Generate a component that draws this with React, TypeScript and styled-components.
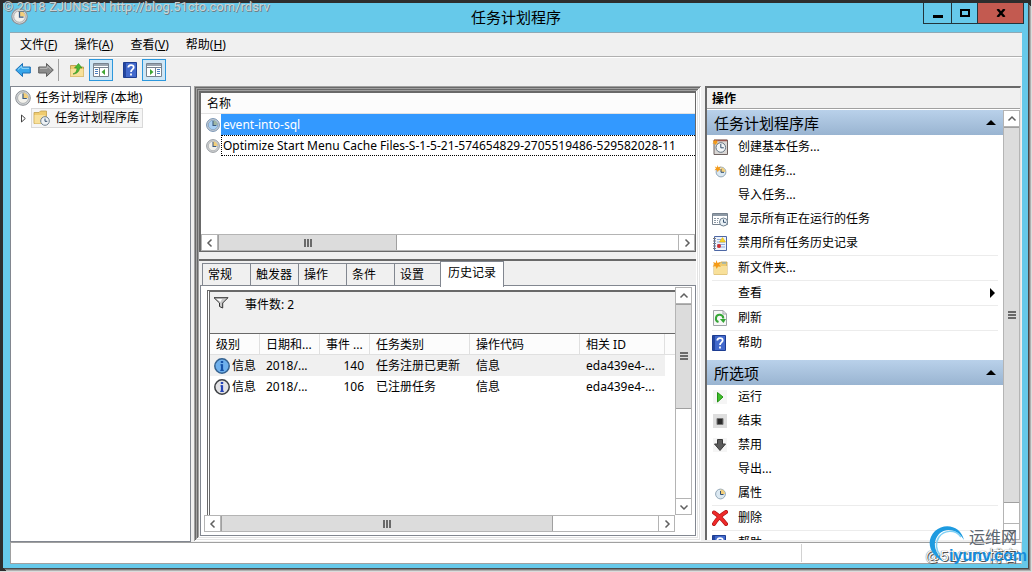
import React from "react";
import styled, { createGlobalStyle, css } from "styled-components";

const Global = createGlobalStyle`
  * { box-sizing: border-box; }
  html, body { margin: 0; padding: 0; }
  body, button, table {
    font-family: "Noto Sans", "Noto Sans CJK SC", sans-serif;
    font-size: 12px;
    line-height: 16px;
    color: #000;
  }
  button { margin: 0; padding: 0; border: 0; background: none; text-align: left; white-space: nowrap; }
`;

const Desktop = styled.div`
  position: relative;
  display: flex;
  height: 100vh;
  padding: 3px 3px 3px 3px;
  background: #2d2d2d;
  border-right: 1px solid #dcdcdc;
  border-bottom: 1px solid #dcdcdc;
  overflow: hidden;
`;

const Window = styled.div`
  flex: 1;
  min-width: 0;
  display: flex;
  flex-direction: column;
  padding: 0 6px 4px 7px;
  background: #66c9ea;
  box-shadow: 1px 1px 0 #4a4a4a, 2px 2px 0 #7d7d7d, 3px 3px 0 #b0b0b0;
`;

const TitleBar = styled.header`
  display: grid;
  grid-template-columns: 101px 1fr 101px;
  height: 29px;
  flex: none;
`;

const AppIcon = styled.div`
  padding: 5px 0 0 1px;
  svg { display: block; }
`;

const Title = styled.h1`
  margin: 0;
  padding-top: 4px;
  font-size: 15px;
  line-height: 20px;
  font-weight: 400;
  text-align: center;
`;

const Captions = styled.div`
  display: flex;
  justify-content: flex-end;
  align-items: flex-start;
  margin-right: -2px;
`;

const CaptionButton = styled.button<{ $width: number; $close?: boolean }>`
  width: ${(p) => p.$width}px;
  height: 21px;
  display: flex;
  align-items: center;
  justify-content: center;
  border: solid #22343b;
  border-width: 0 0 1px 1px;
  background: ${(p) => (p.$close ? "#c35a50" : "transparent")};
  &:last-child { border-right-width: 1px; }
`;

const Client = styled.div`
  flex: 1;
  min-height: 0;
  display: flex;
  flex-direction: column;
  background: #f0f0f0;
  border-top: 1px solid #8fa9b5;
`;

const MenuBar = styled.nav`
  display: flex;
  gap: 17px;
  height: 24px;
  flex: none;
  align-items: center;
  padding: 0 10px;
  border-bottom: 1px solid #b0b0b0;
`;

const ToolBar = styled.div`
  display: flex;
  height: 29px;
  flex: none;
  padding: 1px 5px 5px;
  align-items: center;
  gap: 7px;
  border-top: 1px solid #fff;
  svg { display: block; }
`;

const ToolButton = styled.button<{ $on?: boolean; $group?: boolean }>`
  height: 22px;
  display: flex;
  align-items: center;
  justify-content: center;
  width: 16px;
  margin-left: ${(p) => (p.$group ? 5 : 0)}px;
  ${(p) =>
    p.$on &&
    css`
      width: 24px;
      background: #cfe6f5;
      border: 1px solid #2c97dc;
      margin: 0 -3px;
    `}
`;

const ToolDivider = styled.span`
  width: 1px;
  height: 22px;
  margin: 0 3px 0 -3px;
  background: #a0a0a0;
`;

const Workspace = styled.div`
  flex: 1;
  min-height: 0;
  display: grid;
  grid-template-columns: 181px minmax(0, 506fr) minmax(0, 316fr);
  column-gap: 4px;
  padding-right: 1px;
`;

const TreePane = styled.aside`
  background: #fff;
  border: 1px solid #828790;
  padding: 1px 4px;
`;

const TreeRow = styled.div<{ $child?: boolean }>`
  display: flex;
  align-items: center;
  height: 20px;
  gap: 5px;
  padding-left: ${(p) => (p.$child ? 6 : 0)}px;
`;

const TreeItem = styled.button<{ $selected?: boolean }>`
  display: flex;
  align-items: center;
  height: 20px;
  gap: 5px;
  border: 1px solid ${(p) => (p.$selected ? "#d9d9d9" : "transparent")};
  background: ${(p) => (p.$selected ? "#f5f5f5" : "none")};
  padding: ${(p) => (p.$selected ? "0 3px 0 1px" : "0")};
  margin-left: ${(p) => (p.$selected ? 0 : -1)}px;
`;

const MiddleFrame = styled.main`
  min-width: 0;
  min-height: 0;
  display: grid;
  grid-template-rows: minmax(0, 161fr) 7px minmax(0, 277fr);
  padding: 5px;
  margin: 0 0 1px -1px;
  box-shadow: inset 1px 1px 0 #a0a0a0, inset -1px -1px 0 #fff, inset 2px 2px 0 #696969,
    inset -2px -2px 0 #e3e3e3, inset 3px 3px 0 #a0a0a0, inset -3px -3px 0 #fff,
    inset 4px 4px 0 #696969, inset -4px -4px 0 #e3e3e3, inset 5px 5px 0 #a0a0a0,
    inset -5px -5px 0 #fff;
`;

const TaskPane = styled.section`
  min-height: 0;
  display: flex;
  flex-direction: column;
  background: #fff;
  border: solid #696969;
  border-width: 2px 1px 1px 2px;
`;

const TaskListArea = styled.div`
  flex: 1;
  min-height: 0;
  overflow: hidden;
`;

const TaskTable = styled.table`
  width: 100%;
  table-layout: fixed;
  border-collapse: separate;
  border-spacing: 0;
  th {
    height: 21px;
    padding: 2px 6px 0;
    font-weight: 400;
    text-align: left;
    background: #fcfcfc;
    border-bottom: 1px solid #e2e2e2;
  }
  td { height: 21px; padding: 0; }
`;

const TaskCell = styled.div`
  display: flex;
  align-items: center;
  padding-left: 5px;
  gap: 1px;
  svg { flex: none; }
`;

const TaskName = styled.span<{ $selected?: boolean }>`
  flex: 1;
  min-width: 0;
  height: 21px;
  line-height: 19px;
  padding-left: 1px;
  overflow: hidden;
  white-space: nowrap;
  border: 1px ${(p) => (p.$selected ? "solid #3399ff" : "dotted #000")};
  border-right: 0;
  color: ${(p) => (p.$selected ? "#fff" : "#000")};
  background: ${(p) => (p.$selected ? "#3399ff" : "#fff")};
`;

const ScrollTrack = styled.div<{ $vertical?: boolean }>`
  display: flex;
  flex: none;
  flex-direction: ${(p) => (p.$vertical ? "column" : "row")};
  ${(p) => (p.$vertical ? "width" : "height")}: 17px;
  background: #fff;
  border: solid #b4b4b4;
  border-width: ${(p) => (p.$vertical ? "0 1px" : "1px 0")};
`;

const ScrollButton = styled.button<{ $vertical?: boolean }>`
  flex: none;
  display: flex;
  align-items: center;
  justify-content: center;
  width: ${(p) => (p.$vertical ? 15 : 17)}px;
  height: ${(p) => (p.$vertical ? 17 : 15)}px;
  border: solid #b4b4b4;
  border-width: ${(p) => (p.$vertical ? "1px 0" : "0 1px")};
`;

const ScrollRun = styled.div<{ $vertical?: boolean }>`
  flex: 1;
  min-width: 0;
  min-height: 0;
  display: flex;
  flex-direction: ${(p) => (p.$vertical ? "column" : "row")};
`;

const Thumb = styled.div<{ $share: number; $vertical?: boolean }>`
  flex: 0 0 ${(p) => p.$share}%;
  display: flex;
  align-items: center;
  justify-content: center;
  background: #dcdcdc;
  border: solid #a0a0a0;
  border-width: ${(p) => (p.$vertical ? "1px 0" : "0 1px")};
`;

const DetailPane = styled.section`
  min-height: 0;
  display: flex;
  flex-direction: column;
  padding-left: 1px;
  background: #f0f0f0;
  border-top: 2px solid #696969;
`;

const Tabs = styled.div`
  display: flex;
  align-items: flex-end;
  height: 26px;
  flex: none;
  padding-left: 2px;
  margin-bottom: -2px;
`;

const Tab = styled.button<{ $active?: boolean }>`
  height: ${(p) => (p.$active ? 26 : 22)}px;
  width: ${(p) => (p.$active ? 64 : 48)}px;
  margin: ${(p) => (p.$active ? "0 0 0 -2px" : "0 0 2px")};
  padding: ${(p) => (p.$active ? "0 0 3px 7px" : "1px 0 0 5px")};
  background: ${(p) => (p.$active ? "#fff" : "#f0f0f0")};
  border: solid #828790;
  border-width: ${(p) => (p.$active ? "1px 1px 0" : "1px 0 0 1px")};
  position: relative;
`;

const TabPage = styled.div`
  flex: 1;
  min-height: 0;
  display: grid;
  grid-template: minmax(0, 1fr) 17px / minmax(0, 1fr) 17px;
  padding: 1px 3px 3px;
  background: #fff;
  border: 1px solid #828790;
`;

const HistoryFrame = styled.div`
  min-height: 0;
  overflow: hidden;
  margin: 3px 0 0 3px;
  border: solid #696969;
  border-width: 2px 0 0 3px;
  border-left-style: double;
`;

const HistorySummary = styled.div`
  display: flex;
  gap: 16px;
  height: 42px;
  padding: 5px 3px;
  background: #f0f0f0;
  border-bottom: 1px solid #696969;
`;

const HistoryTable = styled.table`
  width: 100%;
  table-layout: fixed;
  border-collapse: separate;
  border-spacing: 0;
  white-space: nowrap;
  th {
    height: 21px;
    padding: 1px 0 0 6px;
    font-weight: 400;
    text-align: left;
    background: #fcfcfc;
    border: solid #e0e0e0;
    border-width: 0 1px 1px 0;
  }
  th:last-child { border-right: 0; }
  td { height: 21px; padding: 0 0 0 6px; }
  td:first-child { padding-left: 4px; }
`;

const EventRow = styled.tr<{ $selected?: boolean }>`
  td:not(:last-child) { background: ${(p) => (p.$selected ? "#f0f0f0" : "#fff")}; }
  td:nth-child(3) { text-align: right; padding-right: 6px; }
`;

const LevelCell = styled.span`
  display: flex;
  align-items: center;
  gap: 2px;
`;

const ActionsPane = styled.aside`
  min-width: 0;
  min-height: 0;
  display: flex;
  flex-direction: column;
  margin-bottom: 2px;
  border: solid #696969;
  border-width: 2px 1px 0 2px;
  border-right-color: #e3e3e3;
`;

const ActionsTitle = styled.h2`
  margin: 0;
  height: 21px;
  flex: none;
  padding: 3px 5px 0;
  font-size: 12px;
  line-height: 16px;
  font-weight: 700;
  border-bottom: 1px solid #a0a0a0;
`;

const ActionsBody = styled.div`
  flex: 1;
  min-height: 0;
  display: flex;
  padding-top: 1px;
  background: #fff;
`;

const ActionsList = styled.div`
  flex: 1;
  min-width: 0;
  overflow: hidden;
`;

const GroupHeader = styled.button`
  width: 100%;
  height: 25px;
  display: flex;
  align-items: center;
  justify-content: space-between;
  padding: 0 7px;
  font-size: 15px;
  line-height: 20px;
  background: linear-gradient(#b9d1ea, #99b4d1);
`;

const GroupItems = styled.div`
  display: flex;
  flex-direction: column;
  padding: 0 5px 5px;
  &:last-child { padding-bottom: 0; }
`;

const ActionItem = styled.button<{ $divided?: boolean }>`
  height: ${(p) => (p.$divided ? 25 : 24)}px;
  display: grid;
  grid-template-columns: 16px 1fr auto;
  column-gap: 10px;
  align-items: center;
  padding-right: 3px;
  border-top: ${(p) => (p.$divided ? "1px solid #ececec" : "0")};
  svg { display: block; }
`;

const StatusBar = styled.footer`
  height: 22px;
  flex: none;
  display: flex;
  justify-content: flex-end;
  background: #fff;
  border: 1px solid #a0a0a0;
  border-right-color: #d9d9d9;
`;

const StatusCell = styled.span`
  width: 220px;
  margin: 1px 0;
  border-left: 1px solid #d2d2d2;
`;

const TopMark = styled.div`
  position: absolute;
  left: 3px;
  top: 0;
  font-family: Roboto, "Liberation Sans", sans-serif;
  font-size: 13px;
  line-height: 14px;
  white-space: nowrap;
  color: #cdd3d5;
  text-shadow: 1px 1px 0 #6f7f86;
`;

const CornerMark = styled.div`
  position: absolute;
  right: 3px;
  bottom: 4px;
  width: 106px;
  height: 44px;
`;

const MarkHandle = styled.span`
  position: absolute;
  left: 3px;
  bottom: 3px;
  font-family: "Liberation Sans", "Noto Sans CJK SC", sans-serif;
  font-size: 15px;
  line-height: 16px;
  white-space: nowrap;
  color: #fff;
  text-shadow: 0 0 1px #333, 1px 1px 0 #555;
`;

const MarkName = styled.span`
  position: absolute;
  right: 11px;
  top: 4px;
  font-size: 16px;
  line-height: 20px;
  white-space: nowrap;
  color: #5c6670;
`;

const MarkSite = styled.span`
  position: absolute;
  right: 1px;
  bottom: 3px;
  font-family: "Liberation Sans", sans-serif;
  font-size: 16px;
  line-height: 16px;
  font-weight: 700;
  white-space: nowrap;
  color: #168ddc;
`;

const MarkSwirl = styled.svg`
  position: absolute;
  left: 6px;
  top: 0;
`;

/* ---------- icons ---------- */

const Clock = ({ size = 16, face = "#f2f1ec", rim = "#8c9094", wedge = "#f3cf7a" }) => (
  <svg width={size} height={size} viewBox="0 0 16 16" aria-hidden="true">
    <circle cx="8" cy="8" r="7.3" fill="#d4d7da" stroke={rim} />
    <circle cx="8" cy="8" r="5.4" fill={face} stroke={rim} strokeWidth=".6" />
    <path d="M8 8V2.8A5.2 5.2 0 0 1 13.2 8z" fill={wedge} />
    <path d="M8 3.4V8.5H11.8" fill="none" stroke="#3c5b80" strokeWidth="1.2" />
  </svg>
);

const Star = () => (
  <path d="M4.5 0l1 3 3-1.2L7 4.500l2 2.200-3-.2L4.700 9 3.600 6.300.6 6.600 2.500 4.500 1 2l2.700 1z" fill="#f59a16" />
);

const Arrow = ({ dir }: { dir: "back" | "forward" }) => (
  <svg width="16" height="16" viewBox="0 0 16 16" aria-hidden="true">
    <path
      d={dir === "back" ? "M.7 8L7.500 1.500V5H15.300V11H7.500V14.500z" : "M15.300 8L8.500 1.500V5H.7V11H8.500V14.500z"}
      fill={dir === "back" ? "#38a6ea" : "#8b8b8b"}
      stroke={dir === "back" ? "#1c6fb4" : "#5e5e5e"}
      strokeWidth="1"
    />
    <path
      d={dir === "back" ? "M3 7.500L6.800 4V6.300H14" : "M13 7.500L9.200 4V6.300H2"}
      fill="none"
      stroke={dir === "back" ? "#9adcfb" : "#bdbdbd"}
    />
  </svg>
);

const FolderShape = () => (
  <>
    <path d="M1.500 3.500H7L8.500 5H14.500V14.500H1.500z" fill="#efcb6e" stroke="#b8953e" strokeWidth=".8" />
    <path d="M1.500 7H14.500V14.500H1.500z" fill="#f8e09a" />
  </>
);

const FolderUp = () => (
  <svg width="16" height="16" viewBox="0 0 16 16" aria-hidden="true">
    <FolderShape />
    <path d="M4 12C7 11 8 8.500 8 6H5.500L9.500 1.500 13 6H10.500C10.500 9 8 12 4 12z" fill="#4cb833" stroke="#2c8a1c" strokeWidth=".6" />
  </svg>
);

const FolderClock = () => (
  <svg width="17" height="16" viewBox="0 0 17 16" aria-hidden="true">
    <path d="M1 2.500H6L7.500 1H13.500V13.500H1z" fill="#efcb6e" stroke="#c2a04c" strokeWidth=".8" />
    <path d="M1.500 5H12V13.500H1.500z" fill="#f8e09a" />
    <circle cx="12" cy="11" r="4.300" fill="#edf1f4" stroke="#6f8191" />
    <path d="M12 8.500V11.300H14.300" fill="none" stroke="#35506e" />
  </svg>
);

const FolderNew = () => (
  <svg width="16" height="16" viewBox="0 0 16 16" aria-hidden="true">
    <path d="M2 3.500H8L9 2H15V14.500H2z" fill="#efcb6e" stroke="#c2a04c" strokeWidth=".8" />
    <path d="M2 6H15V14.500H2z" fill="#f8e09a" />
    <path d="M10 3H14" stroke="#6fa8dc" />
    <Star />
  </svg>
);

const PaneIcon = ({ side }: { side: "left" | "right" }) => (
  <svg width="16" height="14" viewBox="0 0 16 14" aria-hidden="true">
    <path d="M.5.5H15.500V13.500H.5z" fill="#fff" stroke="#77828e" />
    <path d="M1 2H15" stroke="#9ba5b0" strokeWidth="2" />
    <path d="M1 4.500H15" stroke="#77828e" />
    {side === "left" ? (
      <>
        <path d="M6.500 4V13" stroke="#77828e" />
        <path d="M2 6.500H5M2 8.500H5M2 10.500H5" stroke="#4c7fc0" />
        <path d="M12 6V12L8.500 9z" fill="#3fa535" />
      </>
    ) : (
      <>
        <path d="M9.500 4V13" stroke="#77828e" />
        <path d="M11 6.500H14M11 8.500H14M11 10.500H14" stroke="#4c7fc0" />
        <path d="M4 6V12L7.500 9z" fill="#3fa535" />
      </>
    )}
  </svg>
);

const HelpIcon = () => (
  <svg width="14" height="16" viewBox="0 0 14 16" aria-hidden="true">
    <path d="M.5.5H13.500V15.500H.5z" fill="#4269cc" stroke="#1d3d92" />
    <path d="M1 1H3V15H1z" fill="#24469f" />
    <path d="M5.300 5.500C5.300 2.300 10.700 2.300 10.700 5.200 10.700 7.500 8 7.300 8 10M8 11.500V13.500" fill="none" stroke="#fff" strokeWidth="1.800" />
  </svg>
);

const BasicTask = () => (
  <svg width="16" height="16" viewBox="0 0 16 16" aria-hidden="true">
    <path d="M2 1H15.500V15.500H2z" fill="#d9d6d4" stroke="#6e6260" />
    <path d="M2 1.500H15" stroke="#9c554e" strokeWidth="1.500" />
    <circle cx="8.800" cy="8.500" r="4.800" fill="#f3f6f8" stroke="#647482" />
    <path d="M8.800 5V8.800H11.800" fill="none" stroke="#35506e" />
    <g transform="scale(.7)"><Star /></g>
  </svg>
);

const NewTask = () => (
  <svg width="16" height="16" viewBox="0 0 16 16" aria-hidden="true">
    <circle cx="9" cy="9" r="4.900" fill="#dbe8f1" stroke="#93a7b8" />
    <path d="M9 9V4.500A4.500 4.500 0 0 1 13.500 9z" fill="#f3cf7a" />
    <path d="M9 6V9.300H12" fill="none" stroke="#35506e" />
    <g transform="translate(2 2) scale(.8)"><Star /></g>
  </svg>
);

const SmallClock = () => (
  <svg width="16" height="16" viewBox="0 0 16 16" aria-hidden="true">
    <circle cx="8.500" cy="9" r="4.900" fill="#dbe8f1" stroke="#93a7b8" />
    <path d="M8.500 9V4.500A4.500 4.500 0 0 1 13 9z" fill="#f3cf7a" />
    <path d="M8.500 6V9.500H11.500" fill="none" stroke="#35506e" />
  </svg>
);

const RunningTasks = () => (
  <svg width="16" height="16" viewBox="0 0 16 16" aria-hidden="true">
    <path d="M.5 2.500H15.500V13.500H.5z" fill="#fff" stroke="#77828e" />
    <path d="M1 4H15" stroke="#8d99a5" strokeWidth="2" />
    <path d="M2 7.500H7M2 9.500H6M2 11.500H6" stroke="#8d99a5" strokeDasharray="2 1" />
    <circle cx="11.500" cy="11" r="4" fill="#e9f0f5" stroke="#6f8191" />
    <path d="M11.500 8.500V11.300H14" fill="none" stroke="#35506e" />
  </svg>
);

const LogIcon = () => (
  <svg width="16" height="16" viewBox="0 0 16 16" aria-hidden="true">
    <path d="M2.500 1.500H14.500V15.500H2.500z" fill="#eef3fb" stroke="#4d67a5" />
    <path d="M1 3.500H4M1 6H4M1 8.500H4M1 11H4M1 13.500H4" stroke="#7a7a7a" />
    <path d="M5 4.500H9M5 7H13M5 9.500H13M5 12H13" stroke="#8eabdc" />
    <path d="M10.500 2.500L13.500 7H7.500z" fill="#f5d327" stroke="#d8a900" strokeWidth=".5" />
    <circle cx="7" cy="11" r="2" fill="#d03030" />
  </svg>
);

const RefreshIcon = () => (
  <svg width="16" height="16" viewBox="0 0 16 16" aria-hidden="true">
    <path d="M1.500.5H11L14.500 4V15.500H1.500z" fill="#f7f7f7" stroke="#a0a4a8" />
    <path d="M11 .5V4H14.500" fill="none" stroke="#a0a4a8" />
    <path d="M6.500 12A3.700 3.700 0 1 1 11.300 8.500" fill="none" stroke="#35a535" strokeWidth="2" />
    <path d="M7.800 9H14L11.500 13z" fill="#35a535" />
  </svg>
);

const RunIcon = () => (
  <svg width="16" height="16" viewBox="0 0 16 16" aria-hidden="true">
    <path d="M1 1H15V15H1z" fill="#f5f5f5" />
    <path d="M5.500 3.500V13L11 8z" fill="#3fbf2b" stroke="#249114" />
  </svg>
);

const StopIcon = () => (
  <svg width="16" height="16" viewBox="0 0 16 16" aria-hidden="true">
    <path d="M1 1H15V15H1z" fill="#dedede" />
    <path d="M5 5.500H11V11.500H5z" fill="#2c2c2c" stroke="#777" />
  </svg>
);

const DisableIcon = () => (
  <svg width="16" height="16" viewBox="0 0 16 16" aria-hidden="true">
    <path d="M1 1H15V15H1z" fill="#f5f5f5" />
    <path d="M5.500 2.500H10.500V7H13.500L8 13.500 2.500 7H5.500z" fill="#5a5a5a" stroke="#3a3a3a" />
  </svg>
);

const DeleteIcon = () => (
  <svg width="16" height="16" viewBox="0 0 16 16" aria-hidden="true">
    <path d="M2 2.500C6 5 10 9 14 14M14 2C9 5 5 9 2 14" stroke="#a81414" strokeWidth="4" strokeLinecap="round" fill="none" />
    <path d="M2 2.500C6 5 10 9 14 14M14 2C9 5 5 9 2 14" stroke="#ee2a2a" strokeWidth="2.800" strokeLinecap="round" fill="none" />
  </svg>
);

const InfoIcon = ({ selected }: { selected?: boolean }) => (
  <svg width="16" height="16" viewBox="0 0 16 16" aria-hidden="true">
    <circle cx="8" cy="8" r="7.200" fill={selected ? "#6fb0ec" : "#e2e2e5"} stroke={selected ? "#34618f" : "#3c3f43"} strokeWidth="1.500" />
    <path d="M8 3V5" stroke={selected ? "#1552a8" : "#2444b8"} strokeWidth="2.400" />
    <path d="M6.500 6.800H8V12M6.300 12.300H9.800" fill="none" stroke={selected ? "#1552a8" : "#2444b8"} strokeWidth="1.200" />
    <path d="M8 6.300V12.500" stroke={selected ? "#1552a8" : "#2444b8"} strokeWidth="2.200" />
  </svg>
);

const FilterIcon = () => (
  <svg width="16" height="12" viewBox="0 0 16 12" aria-hidden="true">
    <path d="M1 .7H15L9.700 6V11L6.500 9.500V6z" fill="#c9c9c9" stroke="#333" />
    <path d="M3.500 2H9L7.500 5z" fill="#fff" />
  </svg>
);

const chevrons = {
  left: "M6.500 1.500L3 5 6.500 8.500",
  right: "M3.500 1.500L7 5 3.500 8.500",
  up: "M1.500 6.500L5 3 8.500 6.500",
  down: "M1.500 3.500L5 7 8.500 3.500",
};

const Chevron = ({ dir }: { dir: keyof typeof chevrons }) => (
  <svg width="10" height="10" viewBox="0 0 10 10" aria-hidden="true">
    <path d={chevrons[dir]} fill="none" stroke="#606060" strokeWidth="1.500" />
  </svg>
);

const Grip = ({ vertical }: { vertical?: boolean }) => (
  <svg width="8" height="8" viewBox="0 0 8 8" aria-hidden="true">
    <path d={vertical ? "M0 1H8M0 4H8M0 7H8" : "M1 0V8M4 0V8M7 0V8"} stroke="#6a6a6a" strokeWidth="2" />
  </svg>
);

/* ---------- parts ---------- */

const ScrollBar = ({ vertical, share }: { vertical?: boolean; share: number }) => (
  <ScrollTrack $vertical={vertical}>
    <ScrollButton $vertical={vertical} aria-label={vertical ? "向上" : "向左"}>
      <Chevron dir={vertical ? "up" : "left"} />
    </ScrollButton>
    <ScrollRun $vertical={vertical}>
      <Thumb $vertical={vertical} $share={share}>
        <Grip vertical={vertical} />
      </Thumb>
    </ScrollRun>
    <ScrollButton $vertical={vertical} aria-label={vertical ? "向下" : "向右"}>
      <Chevron dir={vertical ? "down" : "right"} />
    </ScrollButton>
  </ScrollTrack>
);

type Action = { label: string; icon?: React.ReactNode; divided?: boolean; submenu?: boolean };

const libraryActions: Action[] = [
  { label: "创建基本任务...", icon: <BasicTask /> },
  { label: "创建任务...", icon: <NewTask /> },
  { label: "导入任务..." },
  { label: "显示所有正在运行的任务", icon: <RunningTasks /> },
  { label: "禁用所有任务历史记录", icon: <LogIcon /> },
  { label: "新文件夹...", icon: <FolderNew />, divided: true },
  { label: "查看", divided: true, submenu: true },
  { label: "刷新", icon: <RefreshIcon />, divided: true },
  { label: "帮助", icon: <HelpIcon />, divided: true },
];

const selectedActions: Action[] = [
  { label: "运行", icon: <RunIcon /> },
  { label: "结束", icon: <StopIcon /> },
  { label: "禁用", icon: <DisableIcon /> },
  { label: "导出..." },
  { label: "属性", icon: <SmallClock /> },
  { label: "删除", icon: <DeleteIcon />, divided: true },
  { label: "帮助", icon: <HelpIcon />, divided: true },
];

const ActionGroup = ({ title, actions }: { title: string; actions: Action[] }) => (
  <>
    <GroupHeader>
      {title}
      <svg width="10" height="5" viewBox="0 0 10 5" aria-hidden="true">
        <path d="M0 5L5 0 10 5z" />
      </svg>
    </GroupHeader>
    <GroupItems>
      {actions.map((a) => (
        <ActionItem key={a.label} $divided={a.divided}>
          <span>{a.icon}</span>
          {a.label}
          {a.submenu && (
            <svg width="5" height="10" viewBox="0 0 5 10" aria-hidden="true">
              <path d="M0 0L5 5 0 10z" />
            </svg>
          )}
        </ActionItem>
      ))}
    </GroupItems>
  </>
);

const menus = [
  ["文件", "F"],
  ["操作", "A"],
  ["查看", "V"],
  ["帮助", "H"],
];

const tabs = ["常规", "触发器", "操作", "条件", "设置", "历史记录"];

const columns = ["级别", "日期和...", "事件 ...", "任务类别", "操作代码", "相关 ID", ""];
const columnWidths = [50, 60, 50, 100, 110, 85];

const events = [
  { id: "140", category: "任务注册已更新", selected: true },
  { id: "106", category: "已注册任务", selected: false },
];

export default function App() {
  return (
    <Desktop>
      <Global />
      <Window>
        <TitleBar>
          <AppIcon>
            <Clock size={17} />
          </AppIcon>
          <Title>任务计划程序</Title>
          <Captions>
            <CaptionButton $width={28} aria-label="最小化">
              <svg width="10" height="10"><path d="M0 7H10V10H0z" /></svg>
            </CaptionButton>
            <CaptionButton $width={26} aria-label="最大化">
              <svg width="10" height="8"><path d="M1 1H9V7H1z" fill="none" stroke="#000" strokeWidth="2" /></svg>
            </CaptionButton>
            <CaptionButton $width={47} $close aria-label="关闭">
              <svg width="10" height="8"><path d="M1.500 0L8.500 8M8.500 0L1.500 8" stroke="#000" strokeWidth="2.400" /></svg>
            </CaptionButton>
          </Captions>
        </TitleBar>
        <Client>
          <MenuBar>
            {menus.map(([name, key]) => (
              <button key={key}>
                {name}(<u>{key}</u>)
              </button>
            ))}
          </MenuBar>
          <ToolBar>
            <ToolButton aria-label="后退"><Arrow dir="back" /></ToolButton>
            <ToolButton aria-label="前进"><Arrow dir="forward" /></ToolButton>
            <ToolDivider />
            <ToolButton aria-label="上一级"><FolderUp /></ToolButton>
            <ToolButton $on aria-label="显示树"><PaneIcon side="left" /></ToolButton>
            <ToolButton $group aria-label="帮助"><HelpIcon /></ToolButton>
            <ToolButton $on aria-label="显示操作"><PaneIcon side="right" /></ToolButton>
          </ToolBar>
          <Workspace>
            <TreePane>
              <TreeRow>
                <TreeItem><Clock />任务计划程序 (本地)</TreeItem>
              </TreeRow>
              <TreeRow $child>
                <svg width="5" height="9" viewBox="0 0 5 9" aria-hidden="true">
                  <path d="M.5 1V8L4.300 4.500z" fill="#fff" stroke="#444" />
                </svg>
                <TreeItem $selected><FolderClock />任务计划程序库</TreeItem>
              </TreeRow>
            </TreePane>
            <MiddleFrame>
              <TaskPane>
                <TaskListArea>
                  <TaskTable>
                    <thead>
                      <tr><th>名称</th></tr>
                    </thead>
                    <tbody>
                      <tr>
                        <td>
                          <TaskCell>
                            <Clock size={14} face="#a9d0f4" rim="#5b7fa6" wedge="#9fb6a4" />
                            <TaskName $selected>event-into-sql</TaskName>
                          </TaskCell>
                        </td>
                      </tr>
                      <tr>
                        <td>
                          <TaskCell>
                            <Clock size={14} />
                            <TaskName>
                              Optimize Start Menu Cache Files-S-1-5-21-574654829-2705519486-529582028-11
                            </TaskName>
                          </TaskCell>
                        </td>
                      </tr>
                    </tbody>
                  </TaskTable>
                </TaskListArea>
                <ScrollBar share={39} />
              </TaskPane>
              <span />
              <DetailPane>
                <Tabs role="tablist">
                  {tabs.map((t, i) => (
                    <Tab key={t} role="tab" aria-selected={i === 5} $active={i === 5}>
                      {t}
                    </Tab>
                  ))}
                </Tabs>
                <TabPage>
                  <HistoryFrame>
                    <HistorySummary>
                      <FilterIcon />
                      事件数: 2
                    </HistorySummary>
                    <HistoryTable>
                      <colgroup>
                        {columnWidths.map((w, i) => (
                          <col key={i} width={w} />
                        ))}
                        <col />
                      </colgroup>
                      <thead>
                        <tr>
                          {columns.map((c) => (
                            <th key={c}>{c}</th>
                          ))}
                        </tr>
                      </thead>
                      <tbody>
                        {events.map((e) => (
                          <EventRow key={e.id} $selected={e.selected}>
                            <td>
                              <LevelCell><InfoIcon selected={e.selected} />信息</LevelCell>
                            </td>
                            <td>2018/...</td>
                            <td>{e.id}</td>
                            <td>{e.category}</td>
                            <td>信息</td>
                            <td>eda439e4-...</td>
                            <td />
                          </EventRow>
                        ))}
                      </tbody>
                    </HistoryTable>
                  </HistoryFrame>
                  <ScrollBar vertical share={54} />
                  <ScrollBar share={76} />
                </TabPage>
              </DetailPane>
            </MiddleFrame>
            <ActionsPane>
              <ActionsTitle>操作</ActionsTitle>
              <ActionsBody>
                <ActionsList>
                  <ActionGroup title="任务计划程序库" actions={libraryActions} />
                  <ActionGroup title="所选项" actions={selectedActions} />
                </ActionsList>
                <ScrollBar vertical share={95} />
              </ActionsBody>
            </ActionsPane>
          </Workspace>
          <StatusBar><StatusCell /></StatusBar>
        </Client>
      </Window>
      <TopMark>© 2018 ZJUNSEN http://blog.51cto.com/rdsrv</TopMark>
      <CornerMark>
        <MarkHandle>@51CTO博客</MarkHandle>
        <MarkSwirl width="38" height="40" viewBox="0 0 38 40" aria-hidden="true">
          <path d="M36 17C33 3 17-1 7 8-2 17 0 31 16 39 6 29 4 19 11 11 18 4 30 6 36 17z" fill="#1e9be0" />
          <path d="M33 14C27 6 16 7 11 14 7 20 8 27 12 32" fill="none" stroke="#7fd0f5" strokeWidth="1.500" />
        </MarkSwirl>
        <MarkName>运维网</MarkName>
        <MarkSite>iyunv.com</MarkSite>
      </CornerMark>
    </Desktop>
  );
}
